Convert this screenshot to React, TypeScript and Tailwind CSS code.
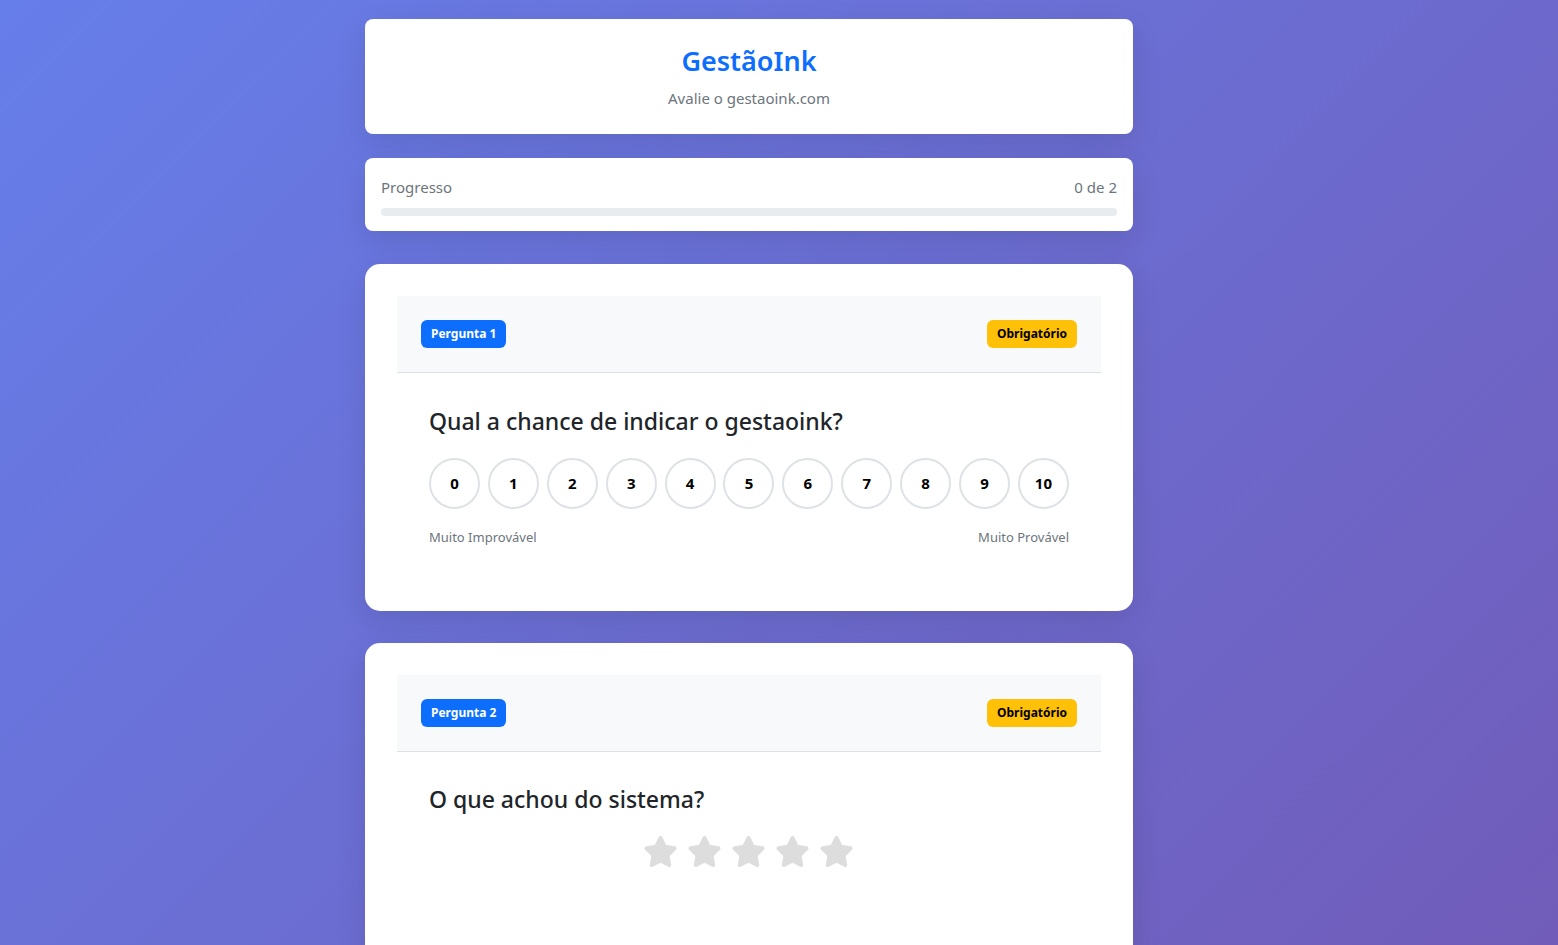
import { FaStar } from "react-icons/fa6";

const font = { fontFamily: '"Segoe UI", "Noto Sans", "Open Sans", sans-serif' };

const scale = [0, 1, 2, 3, 4, 5, 6, 7, 8, 9, 10];

function QuestionHeader({ n }: { n: number }) {
  return (
    <div className="flex items-center justify-between bg-[#f8f9fa] border-b border-[#dee2e6] px-6 py-6">
      <span className="h-[28px] px-[10px] flex items-center rounded-md bg-[#0d6efd] text-white text-[12px] font-bold">
        Pergunta {n}
      </span>
      <span className="h-[28px] px-[10px] flex items-center rounded-md bg-[#ffc107] text-black text-[12px] font-bold">
        Obrigatório
      </span>
    </div>
  );
}

function NpsQuestion() {
  return (
    <div className="bg-white rounded-[15px] shadow-[0_10px_30px_rgba(0,0,0,0.1)] p-8">
      <QuestionHeader n={1} />
      <div className="p-8">
        <h3 className="text-[23px] font-medium text-[#212529] leading-[1.25] mt-[2px] mb-[22px]">
          Qual a chance de indicar o gestaoink?
        </h3>
        <div className="flex justify-between w-[640px]">
          {scale.map((v) => (
            <button
              key={v}
              className="w-[51px] h-[51px] rounded-full border-2 border-[#dee2e6] bg-white text-[15px] font-bold text-black flex items-center justify-center"
            >
              {v}
            </button>
          ))}
        </div>
        <div className="flex justify-between w-[640px] mt-[19px] text-[13px] text-[#6c757d]">
          <span>Muito Improvável</span>
          <span>Muito Provável</span>
        </div>
      </div>
    </div>
  );
}

function StarQuestion() {
  return (
    <div className="bg-white rounded-[15px] shadow-[0_10px_30px_rgba(0,0,0,0.1)] p-8">
      <QuestionHeader n={2} />
      <div className="p-8 pb-[60px]">
        <h3 className="text-[23px] font-medium text-[#212529] leading-[1.25] mt-[1px] mb-[20px]">
          O que achou do sistema?
        </h3>
        <div className="flex justify-center gap-[9px] pr-[2px]">
          {[1, 2, 3, 4, 5].map((s) => (
            <FaStar key={s} size={35} className="text-[#dddddd]" />
          ))}
        </div>
      </div>
    </div>
  );
}

export default function App() {
  return (
    <div
      style={font}
      className="min-h-screen bg-fixed bg-[linear-gradient(135deg,#667eea_0%,#715cb9_100%)] flex justify-center pr-[60px] pt-[19px] pb-10"
    >
      <div className="w-[768px] flex flex-col">
        <div className="bg-white rounded-lg shadow-[0_10px_30px_rgba(0,0,0,0.1)] h-[115px] flex flex-col items-center justify-center">
          <h1 className="text-[27px] font-semibold text-[#0d6efd] leading-tight">GestãoInk</h1>
          <p className="text-[15px] text-[#6c757d] mt-[9px]">Avalie o gestaoink.com</p>
        </div>

        <div className="bg-white rounded-lg shadow-[0_10px_30px_rgba(0,0,0,0.1)] mt-[24px] px-4 pt-[20px] pb-[15px]">
          <div className="flex justify-between text-[15px] text-[#6c757d] leading-[1.2]">
            <span>Progresso</span>
            <span>0 de 2</span>
          </div>
          <div className="h-2 rounded-full bg-[#e9ecef] mt-[12px] overflow-hidden">
            <div className="h-full bg-[#0d6efd]" style={{ width: "0%" }} />
          </div>
        </div>

        <div className="mt-[33px]">
          <NpsQuestion />
        </div>
        <div className="mt-[32px]">
          <StarQuestion />
        </div>
      </div>
    </div>
  );
}
